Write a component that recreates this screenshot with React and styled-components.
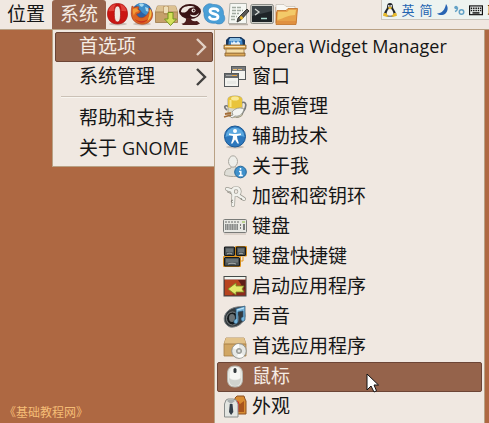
import React from 'react';
import styled, { createGlobalStyle } from 'styled-components';

const colors = {
  panel: '#f0e8e1',
  line: '#b9a184',
  desktop: '#ae6842',
  active: '#95634b',
  activeEdge: '#6c4536',
  text: '#161616',
  light: '#f5ece4',
};

const GlobalStyle = createGlobalStyle`
  * {
    box-sizing: border-box;
  }

  body {
    margin: 0;
    background: ${colors.desktop};
    font-family: 'Open Sans', 'Noto Sans CJK SC', sans-serif;
    font-size: 19px;
    color: ${colors.text};
  }

  button {
    font: inherit;
    color: inherit;
    background: none;
    border: 0;
    padding: 0;
    white-space: nowrap;
  }
`;

const Screen = styled.div`
  display: flex;
  flex-direction: column;
  height: 100vh;
  overflow: hidden;
`;

// top panel

const Panel = styled.header`
  display: flex;
  flex: none;
  height: 30px;
  background: ${colors.panel};
  border-bottom: 1px solid ${colors.line};
`;

const PanelButton = styled.button`
  flex: none;
  padding: 0 7px 2px;
  line-height: 26px;
  border-radius: 3px 3px 0 0;
  ${(p) =>
    p.$open &&
    `
    padding: 0 8px 2px;
    background: ${colors.active};
    color: ${colors.light};
  `}
`;

const Launchers = styled.nav`
  display: flex;
  flex: none;
  padding-top: 2px;
`;

const Launcher = styled.button`
  width: 24px;
  height: 24px;
`;

const InputBar = styled.div`
  display: flex;
  flex: none;
  align-items: center;
  gap: 4px;
  width: 108px;
  height: 20px;
  margin-left: auto;
  padding-left: 1px;
  overflow: hidden;
  background: #edf3f0;
  border: 1px solid #cbc5bc;
  border-top: 0;
  border-right: 0;
  font-size: 13px;
`;

const InputMode = styled.button`
  flex: none;
  width: 14px;
  line-height: 18px;
  color: ${(p) => (p.$plain ? '#111' : '#2364b0')};
`;

// desktop and menus

const Desktop = styled.main`
  display: flex;
  flex: 1;
  align-items: flex-start;
  min-height: 0;
`;

const Side = styled.div`
  display: flex;
  flex-direction: column;
  align-self: stretch;
  flex: none;
`;

const Credit = styled.small`
  margin: auto 0 2px 4px;
  font-family: 'Noto Sans CJK SC', sans-serif;
  font-size: 12px;
  line-height: 18px;
  color: #f5bd76;
`;

const Menu = styled.div`
  flex: none;
  padding: 2px;
  background: ${colors.panel};
  border: 1px solid ${colors.line};
  border-top: 0;
`;

const SystemMenu = styled(Menu)`
  width: 162px;
  margin-left: 52px;
  padding-right: 1px;
  border-right: 0;
`;

const PreferencesMenu = styled(Menu)`
  width: 271px;
`;

const Item = styled.button`
  position: relative;
  display: flex;
  align-items: center;
  gap: 5px;
  width: 100%;
  height: 30px;
  padding: 0 5px;
  text-align: left;
  border: 1px solid transparent;
  border-radius: 2px;
  ${(p) =>
    p.$active &&
    `
    background: ${colors.active};
    border-color: ${colors.activeEdge};
    color: ${colors.light};
  `}
`;

const TextItem = styled(Item)`
  justify-content: space-between;
  padding-left: 23px;
`;

const Label = styled.span`
  padding-bottom: 2px;
  line-height: 26px;
`;

// latin words run a size smaller than the hanzi beside them
const Latin = styled.span`
  font-size: 18px;
`;

const Separator = styled.hr`
  height: 2px;
  margin: 4px 6px 6px;
  border: 0;
  border-top: 1px solid #cbc1b6;
  border-bottom: 1px solid #f8f5f0;
`;

const Pointer = styled.svg`
  position: absolute;
  left: 148px;
  top: 10px;
  z-index: 1;
`;

const Svg = styled.svg`
  display: block;
  flex: none;
`;

const Icon = ({ children, size = 24 }) => (
  <Svg width={size} height={size} viewBox="0 0 24 24" aria-hidden="true">
    {children}
  </Svg>
);

const Chevron = () => (
  <Svg width="12" height="20" viewBox="0 0 12 20" aria-hidden="true">
    <path d="M2 2l8 8-8 8" fill="none" stroke="currentColor" strokeWidth="2.4" opacity=".8" />
  </Svg>
);

// launcher icons

const OperaIcon = () => (
  <Icon>
    <ellipse cx="12" cy="22" rx="9" ry="1.5" fill="#c9bdb5" />
    <path fillRule="evenodd" fill="#cc1512" stroke="#a30e0c" strokeWidth=".7" d="M11.500 1.500C5 1.500 1.500 6 1.500 12s4 10 10 10S21.500 18 21.500 12 18 1.500 11.500 1.500zM11.500 4c2.300 0 3 3 3 8s-.7 8-3 8-3.200-3-3.200-8 .9-8 3.200-8z" />
    <path d="M2.500 9C3.500 5 6 2.500 10 2.300 8.500 3.500 8 6 8 9c-2 0-4 .5-5.500 0zM20.500 9c-1-4-3-6-7-6.700 1.500 1.200 2 3.700 2 6.700 2 0 3.500.5 5 0z" fill="#ee6055" opacity=".6" />
  </Icon>
);

const FirefoxIcon = () => (
  <Icon>
    <ellipse cx="12" cy="22" rx="9" ry="1.500" fill="#c9bdb5" />
    <circle cx="12" cy="11.500" r="10.500" fill="#2c62a5" />
    <path d="M6 3c3-2.500 9-2.500 12 1 2 2.500 3 6 2 9-3 1-7-1-9-4z" fill="#3f8fca" />
    <path d="M9 2c3-1 5 0 5 1l-2 2-2-1zM15 5l3 1 1 4-3-1z" fill="#a8daf0" />
    <path d="M2 4l2.500 1.500C6 4.500 8 4.500 9 5L8 7.500l2.500 1.500-1 2-3 1c1 4 6 5 9 2 3-2 4-5 3.500-8C22 8 23.500 12 22 16c-2 5-7 7-12 6C4 21 .8 16 1.300 10 1.300 8 1.500 6 2 4z" fill="#dc6422" stroke="#a93d1c" strokeWidth=".6" />
    <path d="M20.500 7c2 4 1 9-3 12 1-3 2.500-7 2-10z" fill="#f3bd45" />
    <path d="M3 7c2-1 4-1 4 0l2 2-3 1c-1 1-2 2-2 4-1-2-1.500-5-1-7z" fill="#f09b38" />
    <path d="M5 17c4 3 9 3 13 0-3 5-10 5-13 0z" fill="#c9311e" />
  </Icon>
);

const PackageIcon = () => (
  <Icon>
    <path d="M3.500 4h18l2 6v10.500H1.500V10z" fill="#c6a06a" stroke="#9c7848" strokeWidth=".8" />
    <path d="M3.500 4h18l2 6h-22z" fill="#ddc292" />
    <path d="M1.500 10h22M10 4v8h4V4" fill="none" stroke="#a98555" />
    <path d="M10 5h4v6h-4z" fill="#efdfb9" />
    <path d="M14 10.500h5V17h3.500l-6 6.500-6-6.500H14z" fill="#d5e05b" stroke="#73951f" strokeWidth="1" />
  </Icon>
);

const ChmIcon = () => (
  <Icon>
    <ellipse cx="12" cy="9.500" rx="11" ry="7.500" fill="#391314" />
    <path d="M3 10c0-4 4-6 9-6 2 0 4 .5 5 1.200-3-.2-6 .8-7 2.800-1 2-4 3.500-7 2z" fill="#efe7e0" />
    <path d="M12 12.500c3 1.500 7 1 9-2-.5 3.500-4 5-6 4.500-1.500-.3-2.500-1.200-3-2.500z" fill="#efe7e0" />
    <circle cx="15.500" cy="8.500" r="2" fill="#efe7e0" />
    <circle cx="15.800" cy="8.500" r=".9" fill="#391314" />
    <path d="M8 16l5 .5c0 2 2 3 6 2.500l3 2.500-3 1.500H5l-1.500-1.500c3 0 5-2 4.500-5.500z" fill="#4c1d1c" />
  </Icon>
);

const SkypeIcon = () => (
  <Icon>
    <path d="M3 4c3-3 6-2.500 8-1.500C18 2 22 6 21.500 12.500c2 3 1.500 6-.5 8-2 1.800-5 2-7.500.7C6 22 1.500 18 2 11 .8 8 1 6 3 4z" fill="#4a9fd6" stroke="#3580b8" strokeWidth=".6" />
    <path d="M16 8.500C15 6.300 8.300 5.500 8 9c-.1 3.500 8 2.200 8 5.800 0 3.700-7.500 3.200-8.500.5" fill="none" stroke="#fff" strokeWidth="2.800" strokeLinecap="round" />
  </Icon>
);

const EditorIcon = () => (
  <Icon>
    <path d="M4 1.500h16.500v20h-18z" fill="#f5f7f3" stroke="#aeb0a9" />
    <path d="M6 5.500h9M6 8.500h11M6 11.500h7M5 14.500h6M5 17.500h5" stroke="#a1aaa0" strokeWidth="1.300" strokeDasharray="4 1" />
    <path d="M21 7l2 2-8 9-4 2 1-4z" fill="#5a5955" stroke="#292927" strokeWidth=".9" />
    <path d="M15 13.500l2.500 2.500-2 2-2-2z" fill="#e5b52b" />
    <path d="M3 22.500h19" stroke="#b9afa5" strokeWidth="1.500" />
  </Icon>
);

const TerminalIcon = () => (
  <Icon>
    <rect x=".8" y="2.500" width="22.500" height="19" rx="1.500" fill="#d1d1cb" stroke="#8b8c86" />
    <rect x="2" y="4" width="20" height="16" fill="#1e2427" />
    <path d="M2 4h20v5L2 14z" fill="#3b4346" />
    <path d="M5 7l4 3-4 3" fill="none" stroke="#d3d8d4" strokeWidth="1.300" />
    <path d="M11 16.500h6" stroke="#a9d8cc" strokeWidth="1.500" />
  </Icon>
);

const FolderIcon = () => (
  <Icon>
    <path d="M2 5h8l1 2h11v14H2z" fill="#d78137" stroke="#b36424" strokeWidth=".7" />
    <path d="M2 2.500h8l2 2h9V10H2z" fill="#f9f8f4" stroke="#bbb3a7" strokeWidth=".6" />
    <path d="M3 8.500h9l2-2h9.500L22 22.500H2z" fill="#e7a24a" stroke="#bf6e25" strokeWidth=".8" />
    <path d="M4 10h9l2-2h7l-1 5c-6 0-11 3-17.500 5z" fill="#f3ca69" />
    <path d="M3 19h19v3H3z" fill="#d97e33" opacity=".5" />
  </Icon>
);

const PenguinIcon = () => (
  <Icon size={14}>
    <path d="M12 0c-3 0-5 2-5 6 0 5-5 7-5 13l5 4h10l5-4c0-6-5-8-5-13 0-4-2-6-5-6z" fill="#20272c" />
    <path d="M12 8c-3 3-6 6-6 11 0 4 12 4 12 0 0-5-3-8-6-11z" fill="#f5f5f1" />
    <path d="M8 8l4-2 4 2-4 3zM1 17l4 0 4 5-2 2-7-2zM23 17l-4 0-4 5 2 2 7-2z" fill="#e5b82c" />
    <circle cx="10" cy="5" r="1.500" fill="#fff" />
    <circle cx="14" cy="5" r="1.500" fill="#fff" />
  </Icon>
);

const MoonIcon = () => (
  <Icon size={12}>
    <path d="M18 0c5 6 4 14-1 19-5 4-12 4-17 0 10 0 16-8 18-19z" fill="#2764b3" />
  </Icon>
);

const PunctuationIcon = () => (
  <Icon size={12}>
    <circle cx="6" cy="7" r="3.500" fill="#63a2c6" />
    <path d="M9 7c0 5-2 7-5 8" fill="none" stroke="#63a2c6" strokeWidth="3" />
    <circle cx="17" cy="16" r="4.500" fill="none" stroke="#63a2c6" strokeWidth="3" />
  </Icon>
);

const KeysIcon = () => (
  <Icon size={14}>
    <rect x="1" y="5" width="22" height="15" fill="none" stroke="#111" strokeWidth="2" />
    <path d="M3 9h18M3 13h18" stroke="#111" strokeWidth="2.500" strokeDasharray="2.500 1.500" />
    <path d="M6 17h12" stroke="#111" strokeWidth="2.500" />
  </Icon>
);

// preference icons

const WidgetIcon = () => (
  <Icon>
    <path d="M6 2h12l4 3v8H3V5z" fill="#17375e" />
    <path d="M6 4h13l1 8H5z" fill="#3e86c8" />
    <path d="M7 3h10l1 3H6z" fill="#8ec0e4" />
    <path d="M8 6l1 2 2-2 2 2 2-2 2 2v3H8z" fill="#e5f1fa" />
    <path d="M1 10h22v4H1zM2 18h20v3H2z" fill="#dda958" stroke="#815a2b" strokeWidth=".8" />
    <path d="M3 14h18v4H3z" fill="#f5dfaa" stroke="#9a713c" strokeWidth=".8" />
    <path d="M2 11.500h20" stroke="#f9e4b6" />
  </Icon>
);

const WindowsIcon = () => (
  <Icon>
    <rect x="8.500" y="1.500" width="14" height="13" fill="#f3f3ef" stroke="#55595b" />
    <path d="M9 2h13v4H9z" fill="#77797b" />
    <path d="M10 4.500h9" stroke="#e8be78" strokeDasharray="4 1" />
    <rect x="1.500" y="8.500" width="14" height="13" fill="#f3f3ef" stroke="#55595b" />
    <path d="M2 9h13v4H2z" fill="#686b6d" />
    <path d="M3 10.500h6" stroke="#a3a5a5" />
    <path d="M9 10.500h5" stroke="#e4a546" />
    <path d="M4 16h9v3H4z" fill="#e8e9e5" />
  </Icon>
);

const PowerIcon = () => (
  <Icon>
    <path d="M18 8c6-3 6 4 2 9-1 3-3 5-7 5M6 12c-4-3-6 0-2 3" fill="none" stroke="#76787a" strokeWidth="1.700" />
    <path d="M5 4c0-4 14-4 14 0v16c0 3-14 3-14 0z" fill="#d9d7c8" stroke="#9c9572" strokeWidth=".8" />
    <path d="M5 4c0-4 14-4 14 0v8c-4 2-10 2-14 0z" fill="#e9c43c" />
    <ellipse cx="12" cy="3.500" rx="4" ry="2" fill="#f9e997" />
    <path d="M7.500 5v7" stroke="#fae88a" strokeWidth="2" />
    <path d="M9 17c3-4 8-5 12-3-1 5-5 8-9 7l-3 2-2-2 3-1z" fill="#f3f4f1" stroke="#8e8f8a" strokeWidth=".8" />
    <path d="M2 19l6-1M1 22l7-2" stroke="#a56e39" strokeWidth="1.800" />
  </Icon>
);

const AccessIcon = () => (
  <Icon>
    <ellipse cx="12" cy="22" rx="9" ry="1.500" fill="#c7bdb4" />
    <circle cx="12" cy="11.500" r="10.500" fill="#2d78bd" stroke="#195793" />
    <path d="M2.500 12a9.500 9.500 0 0 1 19 0c-5-2-14-2-19 0z" fill="#5ca8df" />
    <circle cx="12" cy="6" r="2" fill="#fff" />
    <path d="M6 8.500l4.500.5h3l4.500-.5V10l-4 1 .4 3 1.600 4.500h-1.500L12 14.500l-2.500 4H8L9.600 14l.4-3-4-1z" fill="#fff" />
  </Icon>
);

const AboutIcon = () => (
  <Icon>
    <path d="M1.500 20c0-5 2-6.500 6-6.500l1-2h4l1 2c4 0 6 1.500 6 6.500-4 2-14 2-18 0z" fill="#deddd6" stroke="#a8a59b" />
    <ellipse cx="10" cy="6.500" rx="4.500" ry="5.700" fill="#eeeee9" stroke="#aaa79f" />
    <circle cx="17.500" cy="17" r="5.800" fill="#3f91cc" stroke="#236597" />
    <path d="M17.500 13v1.800M16 16.500h1.800v4M15.800 20.500h4" stroke="#fff" strokeWidth="1.500" fill="none" />
  </Icon>
);

const KeyringIcon = () => (
  <Icon>
    <g fill="none" stroke="#9c9a91" strokeWidth="4" strokeLinecap="round">
      <circle cx="13" cy="6.500" r="3.600" />
      <path d="M4 4l6 2M10.500 10L10 20M15 10l6 4" />
    </g>
    <g fill="none" stroke="#f1f1ec" strokeWidth="2.600" strokeLinecap="round">
      <circle cx="13" cy="6.500" r="3.600" />
      <path d="M4 4l6 2M10.500 10L10 20M15 10l6 4" />
    </g>
    <path d="M4 6.500c1 1 2 1 4 2M10 15l-2 1 1.500 2M18 13l.5 2" fill="none" stroke="#86847b" />
  </Icon>
);

const KeyboardIcon = () => (
  <Icon>
    <rect x=".5" y="4.500" width="23" height="13" rx="1" fill="#e8e8e3" stroke="#797b78" />
    <path d="M2 7h15" stroke="#686a68" strokeDasharray="2 1" />
    <path d="M19 7h3" stroke="#8dbc3b" />
    <path d="M2 10h13M2 12h13M2 14h13" stroke="#686b6b" strokeWidth="1.600" strokeDasharray="1.300 .4" />
    <path d="M17 10h1M17 13h1M20 10h2M20 12h2M20 14h2" stroke="#555958" strokeWidth="1.500" />
    <path d="M1 19h22" stroke="#c9bdb4" />
  </Icon>
);

const ShortcutIcon = () => (
  <Icon>
    <path d="M12.500 11V1.500h11V11h-11zM.5 11.500h17v10H.5zM20 12v4h-2" fill="none" stroke="#e5971c" />
    <g fill="#4c5456" stroke="#17191a" strokeWidth="1.200">
      <rect x="1.500" y="2" width="10" height="8.500" rx="1" />
      <rect x="13.500" y="2" width="9" height="8.500" rx="1" />
      <rect x="1.500" y="12.500" width="15" height="8.500" rx="1" />
    </g>
    <path d="M3 3.500h7V7H3zM15 3.500h6V7h-6zM3 14h12v3.500H3z" fill="#697174" />
    <path d="M4 9c2-1 3-1 5 0M16 9c1-1 3-1 4 0M5 19c3-1 5-1 8 0" fill="none" stroke="#aaafaf" />
  </Icon>
);

const StartupIcon = () => (
  <Icon>
    <rect x="1" y="1.500" width="22" height="19.500" fill="#8d2a1c" stroke="#444b49" />
    <path d="M1.500 2h21v2.500h-21z" fill="#f1f5ef" />
    <path d="M2 5h20L9 20H2z" fill="#b7441f" />
    <path d="M15 5h7v10z" fill="#601e17" />
    <path d="M5 14l8-6v3h8l-2 3 2 3h-8v3z" fill="#e3e76a" stroke="#768c22" strokeWidth=".8" />
  </Icon>
);

const SoundIcon = () => (
  <Icon>
    <path d="M2 10C5 3 14 1 21 2l1 9c-1 8-9 12-15 11-5-2-7-7-5-12z" fill="#343a3e" stroke="#777d80" />
    <ellipse cx="9.500" cy="13.500" rx="6" ry="6.500" fill="#14191c" stroke="#8e9496" strokeWidth=".8" />
    <ellipse cx="9" cy="13" rx="3" ry="4" fill="#6c7376" />
    <path d="M12 4l10-3v13c0 3-4 3-4 0 0-1.500 1-2 2-2V6l-5 1v10c-1 3-5 2-4-1 0-1 1-2 2-2V4z" fill="#75b5dc" stroke="#284f6e" strokeWidth=".7" />
    <path d="M14 5l7-2" stroke="#c5e5f4" />
  </Icon>
);

const DefaultAppsIcon = () => (
  <Icon>
    <path d="M3 3h18l2 6v12H1V9z" fill="#d1a663" stroke="#a57e48" strokeWidth=".8" />
    <path d="M3 3h18l2 6H1z" fill="#e2c28a" />
    <path d="M1 9h22" stroke="#aa8048" />
    <circle cx="16" cy="16" r="7.300" fill="#e6e8e5" stroke="#92948f" />
    <path d="M16 9v7l-6-3c1-2 3-4 6-4zM16 16l5 5c-2 2-5 2-7 1z" fill="#fbfbf9" />
    <circle cx="16" cy="16" r="2.600" fill="#b1b3af" stroke="#858884" strokeWidth=".7" />
    <circle cx="16" cy="16" r="1" fill="#f4f4f0" />
  </Icon>
);

const MouseIcon = () => (
  <Icon>
    <path d="M4.500 9c0-5 2-8 7.500-8s7.500 3 7.500 8v5c0 5-2 8-7.500 8s-7.500-3-7.500-8z" fill="#e7e8e3" stroke="#b6b6af" />
    <path d="M6 13c3 3 9 3 12 0 0 5-2 8-6 8s-6-3-6-8z" fill="#d0d2cd" />
    <path d="M7 8c0-4 2-6 5-6 3 0 5 2 5 6v5c-3 2-7 2-10 0z" fill="#f7f7f4" />
    <rect x="10.500" y="3" width="3" height="5" rx="1.500" fill="#32383b" />
  </Icon>
);

const AppearanceIcon = () => (
  <Icon>
    <path d="M12 3l2-2h7l1 3 1 2v13H12z" fill="#d78b32" stroke="#8d5121" />
    <path d="M14 6l3 3 4-3v11h-7z" fill="#a8551d" />
    <path d="M13 5l3 2v9l-3 4z" fill="#d52c20" />
    <path d="M3 5l2-1h5l3 1 2 4v13H1.500V9z" fill="#e3e5e1" stroke="#8a8e8c" />
    <path d="M4 6l4 3 4-3-1-1H5z" fill="#a9afaf" />
    <path d="M6.800 9h2.700l.8 8-2.200 3L6 17z" fill="#343e48" />
  </Icon>
);

const launchers = [
  ['Opera', OperaIcon],
  ['Firefox', FirefoxIcon],
  ['Package', PackageIcon],
  ['CHM', ChmIcon],
  ['Skype', SkypeIcon],
  ['Editor', EditorIcon],
  ['Terminal', TerminalIcon],
  ['Folder', FolderIcon],
];

const preferences = [
  ['Opera Widget Manager', WidgetIcon],
  ['窗口', WindowsIcon],
  ['电源管理', PowerIcon],
  ['辅助技术', AccessIcon],
  ['关于我', AboutIcon],
  ['加密和密钥环', KeyringIcon],
  ['键盘', KeyboardIcon],
  ['键盘快捷键', ShortcutIcon],
  ['启动应用程序', StartupIcon],
  ['声音', SoundIcon],
  ['首选应用程序', DefaultAppsIcon],
  ['鼠标', MouseIcon],
  ['外观', AppearanceIcon],
];

export default function App() {
  const hovered = '鼠标';

  return (
    <Screen lang="zh-CN">
      <GlobalStyle />
      <Panel>
        <PanelButton>位置</PanelButton>
        <PanelButton $open>系统</PanelButton>
        <Launchers>
          {launchers.map(([name, Glyph]) => (
            <Launcher key={name} aria-label={name}>
              <Glyph />
            </Launcher>
          ))}
        </Launchers>
        <InputBar>
          <PenguinIcon />
          <InputMode>英</InputMode>
          <InputMode>简</InputMode>
          <MoonIcon />
          <PunctuationIcon />
          <KeysIcon />
          <InputMode $plain>职</InputMode>
        </InputBar>
      </Panel>

      <Desktop>
        <Side>
          <SystemMenu role="menu">
            <TextItem role="menuitem" $active>
              <Label>首选项</Label>
              <Chevron />
            </TextItem>
            <TextItem role="menuitem">
              <Label>系统管理</Label>
              <Chevron />
            </TextItem>
            <Separator />
            <TextItem role="menuitem">
              <Label>帮助和支持</Label>
            </TextItem>
            <TextItem role="menuitem">
              <Label>
                关于 <Latin>GNOME</Latin>
              </Label>
            </TextItem>
          </SystemMenu>
          <Credit>《基础教程网》</Credit>
        </Side>

        <PreferencesMenu role="menu">
          {preferences.map(([label, Glyph]) => (
            <Item key={label} role="menuitem" $active={label === hovered}>
              <Glyph />
              <Label>{/^[A-Z]/.test(label) ? <Latin>{label}</Latin> : label}</Label>
              {label === hovered && (
                <Pointer width="13" height="20" viewBox="0 0 13 20" aria-hidden="true">
                  <path d="M1 1v16l4-4 3 6 2.500-1.200L8 12h4.500z" fill="#fff" stroke="#111" />
                </Pointer>
              )}
            </Item>
          ))}
        </PreferencesMenu>
      </Desktop>
    </Screen>
  );
}
